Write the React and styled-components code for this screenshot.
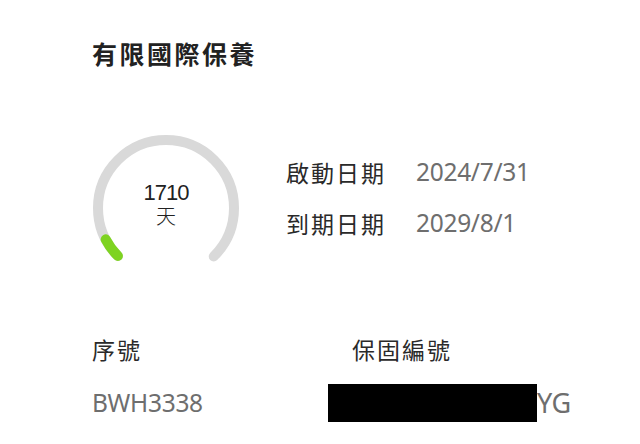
import React from "react";
import styled, { createGlobalStyle } from "styled-components";

const GlobalStyle = createGlobalStyle`
  html, body {
    margin: 0;
    padding: 0;
    background: #ffffff;
  }
  body {
    font-family: "Noto Sans", "Noto Sans CJK TC", sans-serif;
  }
`;

const Card = styled.div`
  width: 640px;
  height: 444px;
  box-sizing: border-box;
  padding: 36px 0 0 92px;
  display: flex;
  flex-direction: column;
  overflow: hidden;
`;

const Title = styled.h2`
  margin: 0;
  font-family: "Noto Sans CJK TC", sans-serif;
  font-size: 25px;
  font-weight: 700;
  letter-spacing: 2.5px;
  line-height: 34px;
  color: #222222;
`;

const WarrantyRow = styled.div`
  display: flex;
  align-items: center;
  gap: 46px;
  margin-top: 64px;
`;

const GaugeBox = styled.div`
  position: relative;
  width: 148px;
  height: 130px;
  flex-shrink: 0;
`;

const GaugeLabel = styled.div`
  position: absolute;
  left: 0;
  right: 0;
  top: 47px;
  display: flex;
  flex-direction: column;
  align-items: center;
  color: #222222;
  font-family: "Liberation Sans", "Noto Sans CJK TC", sans-serif;
`;

const Days = styled.span`
  font-size: 22px;
  line-height: 24px;
  letter-spacing: -1px;
`;

const DayUnit = styled.span`
  font-size: 20px;
  line-height: 24px;
  font-weight: 300;
`;

const DateList = styled.div`
  display: grid;
  grid-template-columns: auto auto;
  column-gap: 30px;
  row-gap: 13px;
  margin-top: -4px;
`;

const Label = styled.span`
  font-family: "Noto Sans CJK TC", sans-serif;
  font-size: 23px;
  line-height: 38px;
  letter-spacing: 2px;
  color: #2a2a2a;
`;

const Value = styled.span`
  font-family: "Noto Sans", sans-serif;
  font-size: 24.5px;
  line-height: 38px;
  letter-spacing: -0.3px;
  color: #6e6e6e;
`;

const InfoGrid = styled.div`
  display: grid;
  grid-template-columns: 260px auto;
  row-gap: 16px;
  margin-top: 66px;
`;

const Redacted = styled.span`
  display: inline-block;
  width: 209px;
  height: 38px;
  background: #000000;
`;

const MaskedValue = styled(Value)`
  margin-left: -24px;
  display: flex;
  align-items: center;
  font-size: 27px;
`;

function Gauge({ progress }) {
  const r = 68;
  const cx = 74;
  const cy = 74;
  const circ = 2 * Math.PI * r;
  const arc = circ * 0.75;
  const fill = arc * progress;
  return (
    <svg width="148" height="130" viewBox="0 0 148 130">
      <circle
        cx={cx}
        cy={cy}
        r={r}
        fill="none"
        stroke="#d9d9d9"
        strokeWidth="10"
        strokeLinecap="round"
        strokeDasharray={`${arc} ${circ}`}
        transform={`rotate(135 ${cx} ${cy})`}
      />
      <circle
        cx={cx}
        cy={cy}
        r={r}
        fill="none"
        stroke="#7ed321"
        strokeWidth="10"
        strokeLinecap="round"
        strokeDasharray={`${fill} ${circ}`}
        transform={`rotate(135 ${cx} ${cy})`}
      />
    </svg>
  );
}

export default function App() {
  return (
    <>
      <GlobalStyle />
      <Card>
        <Title>有限國際保養</Title>
        <WarrantyRow>
          <GaugeBox>
            <Gauge progress={0.065} />
            <GaugeLabel>
              <Days>1710</Days>
              <DayUnit>天</DayUnit>
            </GaugeLabel>
          </GaugeBox>
          <DateList>
            <Label>啟動日期</Label>
            <Value>2024/7/31</Value>
            <Label>到期日期</Label>
            <Value>2029/8/1</Value>
          </DateList>
        </WarrantyRow>
        <InfoGrid>
          <Label>序號</Label>
          <Label>保固編號</Label>
          <Value>BWH3338</Value>
          <MaskedValue>
            <Redacted />
            YG
          </MaskedValue>
        </InfoGrid>
      </Card>
    </>
  );
}
